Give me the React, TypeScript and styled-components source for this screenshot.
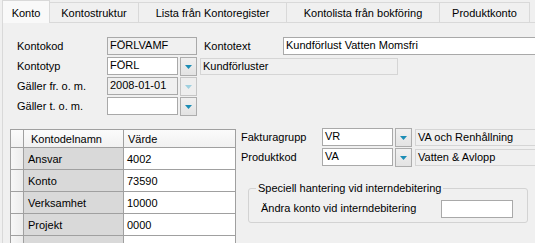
import styled, { createGlobalStyle } from "styled-components"

type BoxKind = "edit" | "readonly" | "desc"

const GlobalStyle = createGlobalStyle`
  html, body {
    margin: 0;
    padding: 0;
    background: #f0f0f0;
    overflow: hidden;
  }
  body {
    font-family: "Liberation Sans", Arial, sans-serif;
    font-size: 11px;
    color: #000;
  }
`

const tabs = [
  { label: "Konto", width: 48 },
  { label: "Kontostruktur", width: 90 },
  { label: "Lista från Kontoregister", width: 149 },
  { label: "Kontolista från bokföring", width: 154 },
  { label: "Produktkonto", width: 91 },
]

const gridRows = [
  { name: "Ansvar", value: "4002" },
  { name: "Konto", value: "73590" },
  { name: "Verksamhet", value: "10000" },
  { name: "Projekt", value: "0000" },
  { name: "Objekt", value: "00000" },
]

const Arrow = ({ disabled }: { disabled?: boolean }) => (
  <svg width="7" height="4" viewBox="0 0 7 4">
    <polygon points="0,0 7,0 3.5,4" fill={disabled ? "#9fd0df" : "#1b8db5"} />
  </svg>
)

const Combo = ({ text, width = 71, disabled }: { text: string; width?: number; disabled?: boolean }) => (
  <>
    <TextBox $w={width} $kind={disabled ? "readonly" : "edit"}>{text}</TextBox>
    <DropButton $disabled={disabled}>
      <Arrow disabled={disabled} />
    </DropButton>
  </>
)

export default function App() {
  return (
    <Window>
      <GlobalStyle />
      <TabStrip>
        {tabs.map((tab, i) => (
          <Tab key={tab.label} $w={tab.width} $active={i === 0}>
            {tab.label}
          </Tab>
        ))}
      </TabStrip>
      <Panel>
        <Form>
          <Row>
            <Label $w={90}>Kontokod</Label>
            <TextBox $w={90} $kind="readonly">FÖRLVAMF</TextBox>
            <Label $w={79} $ml={7}>Kontotext</Label>
            <TextBox $w={270} $kind="edit">Kundförlust Vatten Momsfri</TextBox>
          </Row>
          <Row>
            <Label $w={90}>Kontotyp</Label>
            <Combo text="FÖRL" />
            <TextBox $w={198} $kind="desc">Kundförluster</TextBox>
          </Row>
          <Row>
            <Label $w={90}>Gäller fr. o. m.</Label>
            <Combo text="2008-01-01" disabled />
          </Row>
          <Row>
            <Label $w={90}>Gäller t. o. m.</Label>
            <Combo text="" />
          </Row>
        </Form>
        <Bottom>
          <Grid>
            <HeaderCell />
            <HeaderCell $pad={7}>Kontodelnamn</HeaderCell>
            <HeaderCell $pad={4}>Värde</HeaderCell>
            {gridRows.map((row) => (
              <GridRow key={row.name}>
                <RowHeader />
                <NameCell>{row.name}</NameCell>
                <ValueCell>{row.value}</ValueCell>
              </GridRow>
            ))}
          </Grid>
          <Side>
            <Row>
              <Label $w={81}>Fakturagrupp</Label>
              <Combo text="VR" />
              <TextBox $w={130} $kind="desc">VA och Renhållning</TextBox>
            </Row>
            <Row>
              <Label $w={81}>Produktkod</Label>
              <Combo text="VA" />
              <TextBox $w={130} $kind="desc">Vatten &amp; Avlopp</TextBox>
            </Row>
            <Group>
              <Legend>Speciell hantering vid interndebitering</Legend>
              <GroupRow>
                <Label $w={180}>Ändra konto vid interndebitering</Label>
                <TextBox $w={72} $kind="edit" />
              </GroupRow>
            </Group>
          </Side>
        </Bottom>
      </Panel>
    </Window>
  )
}

const Window = styled.div`
    width: 535px;
    height: 243px;
    overflow: hidden;
    background: #f0f0f0;
    display: flex;
    flex-direction: column;
`

const TabStrip = styled.div`
    display: flex;
    align-items: flex-end;
    height: 22px;
    padding-left: 2px;
    position: relative;
    z-index: 2;
    flex-shrink: 0;
`

const Tab = styled.div<{ $w: number; $active?: boolean }>`
    box-sizing: border-box;
    width: ${({ $w }) => $w}px;
    height: ${({ $active }) => ($active ? 23 : 20)}px;
    margin-bottom: ${({ $active }) => ($active ? -1 : 0)}px;
    margin-left: -1px;
    padding-top: ${({ $active }) => ($active ? 2 : 0)}px;
    &:first-child {
        margin-left: 0;
    }
    display: flex;
    align-items: center;
    justify-content: center;
    white-space: nowrap;
    border: 1px solid #d9d9d9;
    border-bottom: none;
    background: ${({ $active }) => ($active ? "#f9f9f9" : "#f0f0f0")};
    position: relative;
    z-index: ${({ $active }) => ($active ? 1 : 0)};
`

const Panel = styled.div`
    flex: 1;
    width: 570px;
    margin-left: 2px;
    border: 1px solid #d9d9d9;
    background: #f0f0f0;
    display: flex;
    flex-direction: column;
`

const Form = styled.div`
    display: flex;
    flex-direction: column;
    padding: 13px 0 0 14px;
`

const Row = styled.div`
    display: flex;
    align-items: center;
    height: 20px;
`

const Label = styled.div<{ $w: number; $ml?: number }>`
    width: ${({ $w }) => $w}px;
    margin-left: ${({ $ml }) => $ml ?? 0}px;
    flex-shrink: 0;
    white-space: nowrap;
    line-height: 13px;
`

const TextBox = styled.div<{ $w: number; $kind: BoxKind }>`
    box-sizing: border-box;
    width: ${({ $w }) => $w}px;
    height: ${({ $kind }) => ($kind === "desc" ? 17 : 18)}px;
    flex-shrink: 0;
    border: 1px solid ${({ $kind }) => ($kind === "desc" ? "#d5d5d5" : "#a9a9a9")};
    background: ${({ $kind }) => ($kind === "edit" ? "#ffffff" : "#f0f0f0")};
    padding-left: 2px;
    line-height: ${({ $kind }) => ($kind === "desc" ? 14 : 15)}px;
    white-space: nowrap;
    overflow: hidden;
`

const DropButton = styled.div<{ $disabled?: boolean }>`
    box-sizing: border-box;
    width: 17px;
    height: 19px;
    margin: 0 3px 0 2px;
    flex-shrink: 0;
    border: 1px solid ${({ $disabled }) => ($disabled ? "#c6c6c6" : "#adadad")};
    background: ${({ $disabled }) => ($disabled ? "#eeeeee" : "linear-gradient(#f0f0f0, #e3e3e3)")};
    display: flex;
    align-items: center;
    justify-content: center;
    padding-top: 1px;
`

const Bottom = styled.div`
    display: flex;
    align-items: flex-start;
    margin-top: 11px;
    padding-left: 7px;
`

const Grid = styled.div`
    display: grid;
    grid-template-columns: 13px 100px 112px;
    grid-template-rows: 18px;
    grid-auto-rows: 22px;
    margin-top: 2px;
    border-top: 1px solid #a0a0a0;
    border-left: 1px solid #a0a0a0;
    flex-shrink: 0;
`

const GridRow = styled.div`
    display: contents;
`

const cellBase = `
    box-sizing: border-box;
    border-right: 1px solid #a0a0a0;
    border-bottom: 1px solid #a0a0a0;
    display: flex;
    align-items: center;
    white-space: nowrap;
    overflow: hidden;
`

const HeaderCell = styled.div<{ $pad?: number }>`
    ${cellBase}
    padding-left: ${({ $pad }) => $pad ?? 0}px;
    background: linear-gradient(#fbfbfb, #f1f1f1);
`

const RowHeader = styled.div`
    ${cellBase}
    background: linear-gradient(90deg, #f7f7f7, #ececec);
`

const NameCell = styled.div`
    ${cellBase}
    padding-left: 4px;
    background: #d9d9d9;
`

const ValueCell = styled.div`
    ${cellBase}
    padding-left: 3px;
    background: #ffffff;
`

const Side = styled.div`
    display: flex;
    flex-direction: column;
    margin-left: 5px;
`

const Group = styled.fieldset`
    box-sizing: border-box;
    width: 280px;
    margin: 15px 0 0 7px;
    padding: 5px 12px 5px 12px;
    border: 1px solid #d3d3d3;
    border-radius: 3px;
    min-width: 0;
`

const Legend = styled.legend`
    margin-left: -5px;
    padding: 0 2px;
    line-height: 13px;
    white-space: nowrap;
`

const GroupRow = styled.div`
    display: flex;
    align-items: center;
    height: 17px;
`
